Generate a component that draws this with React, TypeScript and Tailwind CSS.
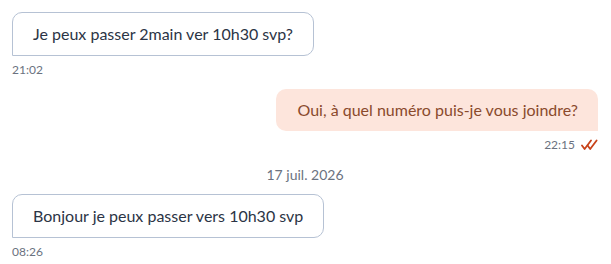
import React from "react"

function DoubleCheck() {
  return (
    <svg width="17" height="12" viewBox="0 0 17 12" fill="none" className="text-[#c8431a]">
      <path d="M1 6.5 L3.6 10 L10 1.5" stroke="currentColor" strokeWidth="1.8" strokeLinecap="round" strokeLinejoin="round" />
      <path d="M6.6 6.5 L9.2 10 L15.6 1.5" stroke="currentColor" strokeWidth="1.8" strokeLinecap="round" strokeLinejoin="round" />
    </svg>
  )
}

function Incoming({ text, time }: { text: string; time: string }) {
  return (
    <div className="flex flex-col items-start">
      <div className="border border-[#b6c2d4] bg-white rounded-[10px] rounded-bl-none px-5 py-[9px] text-[16px] leading-6 text-[#2b3445]">
        {text}
      </div>
      <span className="mt-[6px] text-[12px] leading-4 text-[#6b7280]">{time}</span>
    </div>
  )
}

function Outgoing({ text, time }: { text: string; time: string }) {
  return (
    <div className="flex flex-col items-end">
      <div className="bg-[#fde5dc] rounded-[10px] rounded-br-none pl-[21px] pr-5 py-[9px] text-[16px] leading-6 text-[#8a4a2c]">
        {text}
      </div>
      <div className="mt-[6px] flex items-center gap-[6px]">
        <span className="text-[12px] leading-4 text-[#6b7280]">{time}</span>
        <DoubleCheck />
      </div>
    </div>
  )
}

export default function App() {
  return (
    <div className="min-h-screen bg-white pl-3 pr-[13px] pt-3 font-['Lato','Open_Sans',sans-serif]">
      <div className="flex flex-col">
        <Incoming text="Je peux passer 2main ver 10h30 svp?" time="21:02" />
        <div className="mt-[11px]">
          <Outgoing text="Oui, à quel numéro puis-je vous joindre?" time="22:15" />
        </div>
        <div className="mt-[12px] text-center text-[14px] leading-5 text-[#6b7280]">17 juil. 2026</div>
        <div className="mt-[9px]">
          <Incoming text="Bonjour je peux passer vers 10h30 svp" time="08:26" />
        </div>
      </div>
    </div>
  )
}
